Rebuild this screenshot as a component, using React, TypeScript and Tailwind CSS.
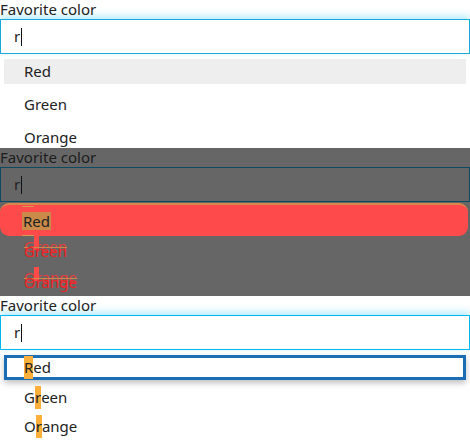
import React from "react";

const font = { fontFamily: '"Noto Sans", "Open Sans", sans-serif' };

const colors = ["Red", "Green", "Orange"];

function Label({ dark }: { dark?: boolean }) {
  return (
    <div
      className={`h-[19px] text-[15px] leading-[18px] ${dark ? "text-[#1c1c1c]" : "text-[#222]"}`}
    >
      Favorite color
    </div>
  );
}

function Input({ variant }: { variant: "plain" | "debug" | "focus" }) {
  const cls =
    variant === "debug"
      ? "border-[#0d4a62] bg-[#666666]"
      : variant === "focus"
        ? "border-[#00b8f0] bg-white shadow-[0_-3px_8px_rgba(0,190,240,0.3)]"
        : "border-[#17a8dc] bg-white shadow-[0_-3px_8px_rgba(0,190,240,0.3)]";
  return (
    <div className={`h-[35px] border flex items-center pl-[13px] ${cls}`}>
      <span className="text-[15px] text-[#222] leading-none">r</span>
      <span className="w-px h-[18px] bg-[#111] ml-px" />
    </div>
  );
}

// first panel: plain dropdown with grey hover row
function PlainPanel() {
  return (
    <div className="h-[148px] bg-white">
      <Label />
      <Input variant="plain" />
      <div className="pt-px">
        {colors.map((c, i) => (
          <div key={c} className="h-[33px] px-1 py-1">
            <div
              className={`h-full flex items-center pl-5 text-[15px] text-[#222] ${i === 0 ? "bg-[#eeeeee]" : ""}`}
            >
              {c}
            </div>
          </div>
        ))}
      </div>
    </div>
  );
}

// second panel: debug overlay
function DebugPanel() {
  return (
    <div className="h-[148px] bg-[#666666]">
      <Label dark />
      <Input variant="debug" />
      <div className="pt-px">
        <div className="h-[33px] pr-[2px]">
          <div className="h-full rounded-[9px] bg-[#fe4a4a] border-t-2 border-[#d98a4a] flex items-center pl-[22px]">
            <span className="relative text-[15px] text-[#222] leading-[18px] bg-[#c98a4a] px-px">
              Red
              <span className="absolute left-0 -top-[6px] w-[12px] h-px bg-[#d99a50]" />
              <span className="absolute left-0 -bottom-[6px] w-[12px] h-px bg-[#d99a50]" />
            </span>
          </div>
        </div>
        {["Green", "Orange"].map((c) => (
          <div key={c} className="h-[31px] flex items-center pl-6">
            <span className="relative text-[15px] leading-none text-[#ee2222]">
              <span aria-hidden className="absolute left-0 -top-[5px] text-[#e83a3a]">{c}</span>
              <span className="absolute left-[10px] -top-[8px] w-[5px] h-[14px] bg-[#ff4a4a]" />
              <span className="absolute left-0 top-[3px] w-full h-px bg-[#c98a4a]" />
              <span className="relative">{c}</span>
            </span>
          </div>
        ))}
      </div>
    </div>
  );
}

function Hl({ text, idx }: { text: string; idx: number }) {
  return (
    <>
      {text.slice(0, idx)}
      <span className="bg-[#fbb03b]">{text[idx]}</span>
      {text.slice(idx + 1)}
    </>
  );
}

// third panel: focused list item with match highlight
function FocusPanel() {
  return (
    <div className="h-[148px] bg-white">
      <Label />
      <Input variant="focus" />
      <div className="pt-[5px] px-1">
        <div className="h-[25px] border-[3px] border-[#1b6db6] shadow-[0_3px_6px_rgba(0,0,0,0.25)] flex items-center pl-[17px] text-[15px] text-[#222]">
          <Hl text="Red" idx={0} />
        </div>
        <div className="h-[29px] flex items-center pl-5 text-[15px] text-[#222] mt-[3px]">
          <Hl text="Green" idx={1} />
        </div>
        <div className="h-[29px] flex items-center pl-5 text-[15px] text-[#222]">
          <Hl text="Orange" idx={1} />
        </div>
      </div>
    </div>
  );
}

export default function App() {
  return (
    <div className="w-[470px] h-[444px] overflow-hidden bg-white" style={font}>
      <PlainPanel />
      <DebugPanel />
      <FocusPanel />
    </div>
  );
}
